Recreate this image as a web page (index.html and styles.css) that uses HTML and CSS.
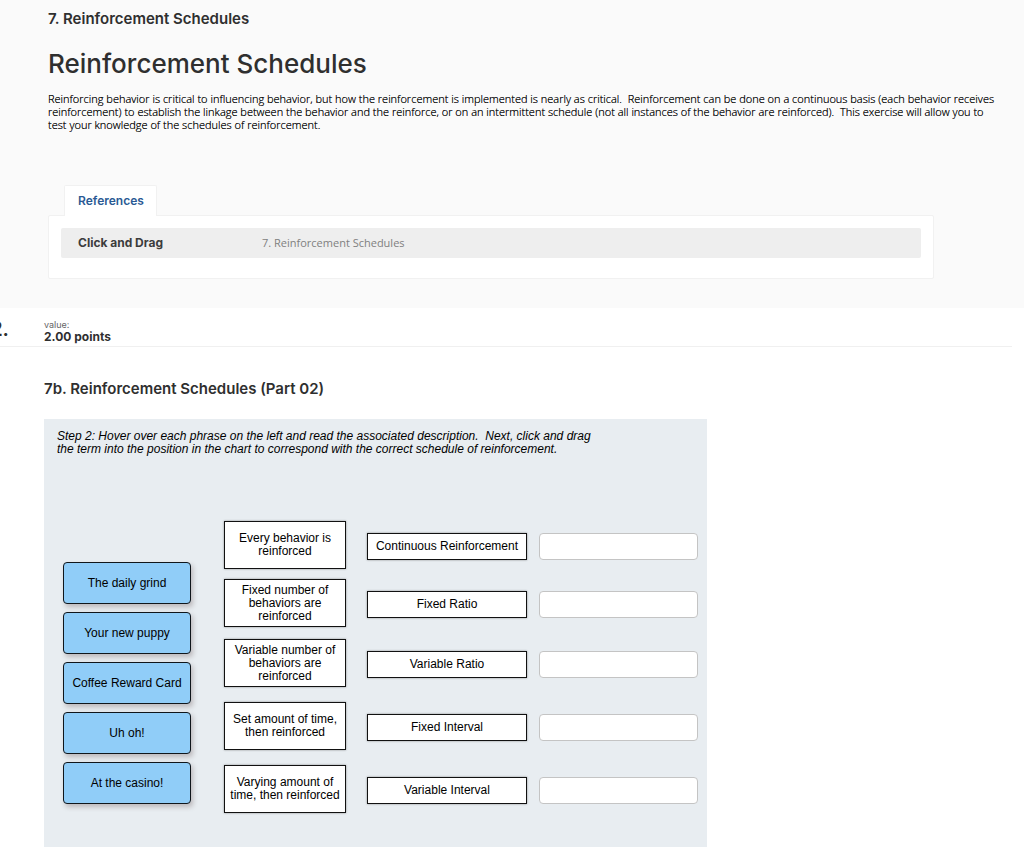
FILE: index.html
```
<!DOCTYPE html>
<html lang="en">
<head>
<meta charset="utf-8">
<title>Reinforcement Schedules</title>
<link rel="stylesheet" href="styles.css">
</head>
<body>
<section class="intro">
  <h2 class="heading">7. Reinforcement Schedules</h2>
  <h1 class="title">Reinforcement Schedules</h1>
  <p class="copy">Reinforcing behavior is critical to influencing behavior, but how the reinforcement is implemented is nearly as critical.&nbsp; Reinforcement can be done on a continuous basis (each behavior receives<br>reinforcement) to establish the linkage between the behavior and the reinforce, or on an intermittent schedule (not all instances of the behavior are reinforced).&nbsp; This exercise will allow you to<br>test your knowledge of the schedules of reinforcement.</p>
  <div class="references">
    <button class="tab" type="button">References</button>
    <div class="sheet">
      <dl class="reference">
        <dt>Click and Drag</dt>
        <dd>7. Reinforcement Schedules</dd>
      </dl>
    </div>
  </div>
</section>
<main class="question">
  <header class="question-head">
    <span class="number">2.</span>
    <div class="value"><span class="value-label">value:</span><strong class="points">2.00 points</strong></div>
  </header>
  <h2 class="heading part">7b. Reinforcement Schedules (Part 02)</h2>
  <div class="board">
    <p class="step">Step 2: Hover over each phrase on the left and read the associated description.&nbsp; Next, click and drag<br>the term into the position in the chart to correspond with the correct schedule of reinforcement.</p>
    <div class="activity">
      <div class="chips">
        <button class="chip" type="button">The daily grind</button>
        <button class="chip" type="button">Your new puppy</button>
        <button class="chip" type="button">Coffee Reward Card</button>
        <button class="chip" type="button">Uh oh!</button>
        <button class="chip" type="button">At the casino!</button>
      </div>
      <div class="chart">
        <div class="phrase">Every behavior is reinforced</div>
        <label class="term" for="drop1">Continuous Reinforcement</label>
        <input class="drop" id="drop1" type="text" readonly>
        <div class="phrase">Fixed number of behaviors are reinforced</div>
        <label class="term" for="drop2">Fixed Ratio</label>
        <input class="drop" id="drop2" type="text" readonly>
        <div class="phrase">Variable number of behaviors are reinforced</div>
        <label class="term" for="drop3">Variable Ratio</label>
        <input class="drop" id="drop3" type="text" readonly>
        <div class="phrase">Set amount of time, then reinforced</div>
        <label class="term" for="drop4">Fixed Interval</label>
        <input class="drop" id="drop4" type="text" readonly>
        <div class="phrase">Varying amount of time, then reinforced</div>
        <label class="term" for="drop5">Variable Interval</label>
        <input class="drop" id="drop5" type="text" readonly>
      </div>
    </div>
  </div>
</main>
</body>
</html>
```
FILE: styles.css
```
* { box-sizing: border-box; }
body {
  margin: 0;
  background: #fff;
  color: #2f2f2f;
  font-family: Inter, sans-serif;
  font-size: 12px;
  overflow-x: hidden;
}
h1, h2, p, dl, dd { margin: 0; }
button { font-family: inherit; }

.intro { padding: 10px 0 29px 48px; background: #fafafa; }
.heading { font-size: 15px; line-height: 18px; font-weight: 600; }
.title { margin-top: 19px; font-size: 26px; line-height: 34px; font-weight: 500; }
.copy {
  margin-top: 11px;
  color: #111;
  font-family: "Open Sans", sans-serif;
  font-size: 11px;
  font-weight: 300;
  line-height: 13px;
  text-shadow: 0 0 0 #111;
  white-space: nowrap;
}

.references { margin: 54px 90px 0 0; }
.tab {
  display: block;
  position: relative;
  z-index: 1;
  height: 31px;
  margin: 0 0 -1px 16px;
  padding: 0 12px 2px 13px;
  border: 1px solid #f1f1f1;
  border-bottom: 0;
  border-radius: 2px 2px 0 0;
  background: #fff;
  color: #2a5a94;
  font-size: 12px;
  font-weight: 600;
}
.sheet { padding: 12px 12px 20px; border: 1px solid #f1f1f1; border-radius: 2px; background: #fff; }
.reference {
  display: flex;
  align-items: center;
  height: 30px;
  padding: 0 17px 2px;
  border-radius: 2px;
  background: #eee;
}
.reference dt { flex: 0 0 184px; color: #3c3c3c; font-weight: 700; }
.reference dd { color: #808080; font-family: "Open Sans", sans-serif; font-size: 11px; }

.question-head {
  display: flex;
  height: 39px;
  margin-right: 12px;
  padding-top: 10px;
  border-bottom: 1px solid #f0f0f0;
}
.number {
  display: flex;
  justify-content: flex-end;
  width: 9px;
  margin-right: 35px;
  overflow: hidden;
  font-size: 20px;
  line-height: 22px;
  font-weight: 600;
}
.value { display: flex; flex-direction: column; }
.value-label { color: #666; font-size: 9px; line-height: 13px; }
.points { font-size: 12px; line-height: 12px; }
.part { margin: 33px 0 0 44px; }

.board {
  max-width: 663px;
  margin: 21px 0 0 44px;
  padding: 11px 9px 35px 13px;
  background: #e8edf1;
  color: #000;
  font-family: "Liberation Sans", Arial, sans-serif;
  font-size: 12px;
  line-height: 13px;
}
.step { font-style: italic; white-space: nowrap; }
.activity { display: flex; gap: 33px; padding: 65px 0 0 6px; }
.chips { display: flex; flex-direction: column; gap: 8px; padding-top: 41px; }
.chip {
  width: 128px;
  height: 42px;
  padding: 0;
  border: 1px solid #10161b;
  border-radius: 4px;
  background: #90cdf8;
  box-shadow: 2px 3px 5px rgba(60, 30, 30, 0.25);
  color: #000;
  font-size: 12px;
}
.chart {
  display: grid;
  grid-template-columns: 143px 160px 159px;
  grid-template-rows: 58px 60px 63px 63px 48px;
  align-items: start;
}
.phrase, .term {
  display: flex;
  align-items: center;
  justify-content: center;
  border: 1px solid #111;
  background: #fff;
  box-shadow: 0 0 2px rgba(0, 0, 0, 0.4);
  text-align: center;
}
.phrase { height: 48px; margin-right: 21px; padding: 0 2px; }
.term, .drop { height: 27px; margin-top: 12px; }
.drop {
  width: 100%;
  margin-left: 12px;
  padding: 0 6px;
  border: 1px solid #c4c4c4;
  border-radius: 4px;
  background: #fff;
  outline: 0;
}
```
